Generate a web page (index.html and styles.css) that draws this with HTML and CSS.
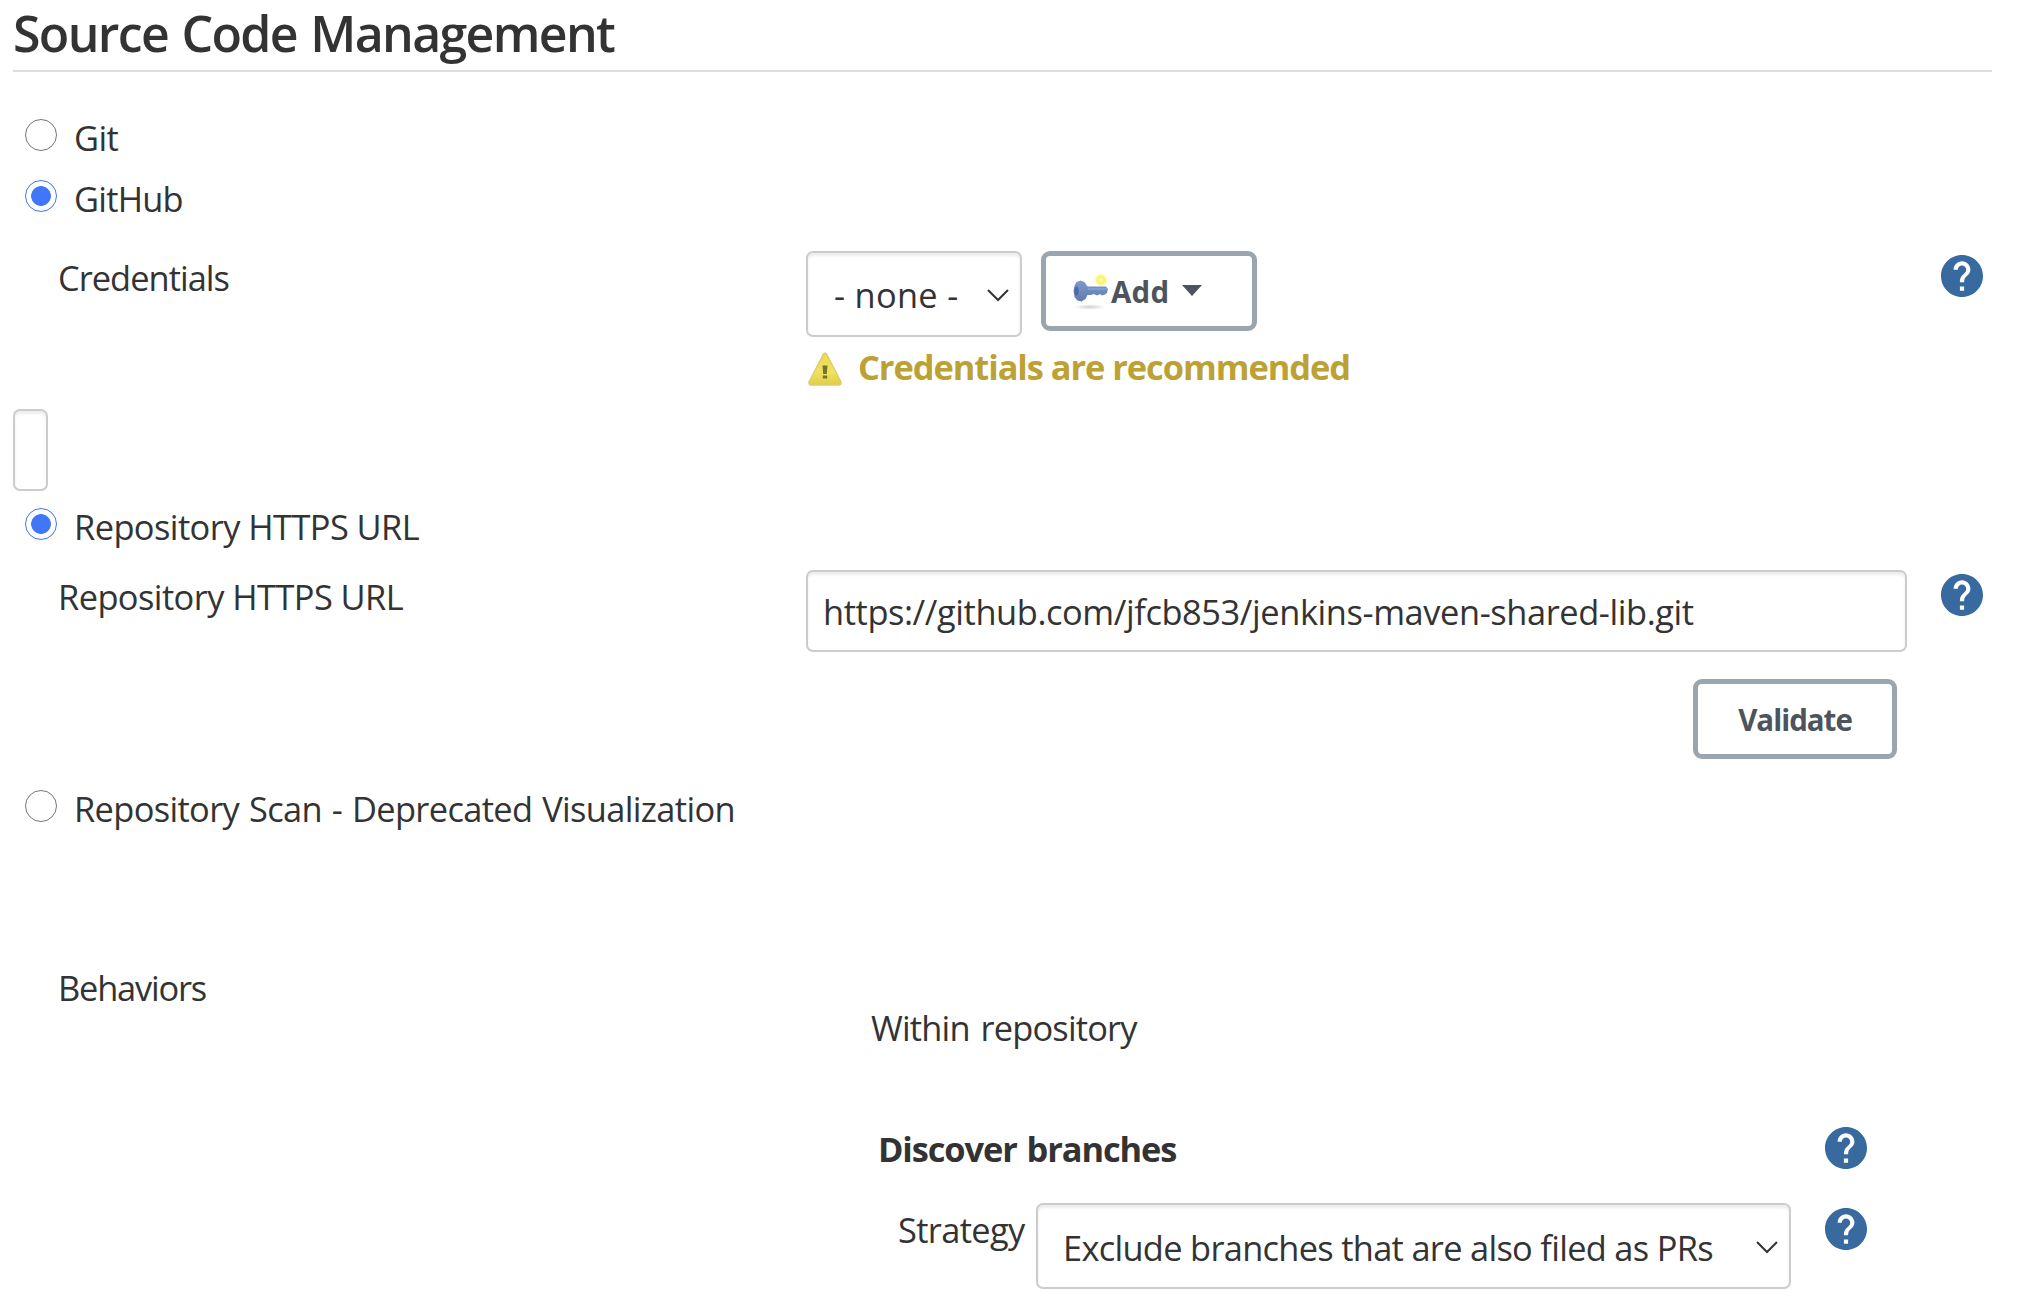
FILE: index.html
```html
<!DOCTYPE html>
<html lang="en">
<head>
<meta charset="utf-8">
<title>Source Code Management</title>
<link rel="stylesheet" href="styles.css">
</head>
<body>
<svg class="sprite" aria-hidden="true">
  <symbol id="help" viewBox="2 2 20 20"><path fill="#38699f" d="M12 2C6.480 2 2 6.480 2 12s4.480 10 10 10 10-4.480 10-10S17.520 2 12 2zm1 17h-2v-2h2v2zm2.070-7.750l-.9.920C13.450 12.900 13 13.500 13 15h-2v-.5c0-1.100.45-2.100 1.170-2.830l1.240-1.260c.37-.36.59-.86.59-1.410 0-1.100-.9-2-2-2s-2 .9-2 2H8c0-2.210 1.790-4 4-4s4 1.790 4 4c0 .88-.36 1.680-.93 2.250z"/></symbol>
  <symbol id="chevron" viewBox="0 0 22 13"><path fill="none" stroke="#333" stroke-width="2" d="M1 1l10 10L21 1"/></symbol>
</svg>
<main class="section">
  <h1 class="title">Source Code Management</h1>
  <div class="radio-row"><span class="radio"></span><span class="t-git">Git</span></div>
  <div class="radio-row"><span class="radio radio-on"></span><span class="t-github">GitHub</span></div>

  <div class="row credentials">
    <div class="label"><span class="t-cred">Credentials</span></div>
    <div>
      <div class="controls">
        <div class="field select select-small"><span class="t-none">- none -</span><svg class="chevron"><use href="#chevron"/></svg></div>
        <button class="button add">
          <svg class="key" viewBox="0 0 36 36">
            <defs>
              <radialGradient id="glow"><stop offset="0" stop-color="#fdf9a0"/><stop offset=".2" stop-color="#fdf9a0"/><stop offset=".5" stop-color="#fbf35c"/><stop offset="1" stop-color="#fbf251" stop-opacity="0"/></radialGradient>
              <radialGradient id="shade"><stop offset="0" stop-color="#bbb" stop-opacity=".7"/><stop offset="1" stop-color="#bbb" stop-opacity="0"/></radialGradient>
              <linearGradient id="blue" x2="0" y2="1"><stop offset="0" stop-color="#7f9bc9"/><stop offset="1" stop-color="#5d7ab5"/></linearGradient>
            </defs>
            <ellipse cx="18" cy="33" rx="16" ry="2.800" fill="url(#shade)"/>
            <path fill="url(#blue)" d="M4.500 8l4-1.500 4 1.500 3 4.500H34l2 2.500-1 4-2 1.500-3 1-2-1.500-3 1.500-3-1.500-3 1h-3.500l-2 4-4 2.500-4-1-3-3.500-1-6 1-5.500z"/>
            <ellipse cx="4.500" cy="17" rx="2" ry="4.500" fill="#4a6aa5"/>
            <path stroke="#8eaad4" stroke-width="1.200" d="M16 15h19"/>
            <circle cx="29" cy="6" r="6.800" fill="url(#glow)"/>
          </svg>
          <span class="t-add">Add</span>
          <svg class="caret" viewBox="0 0 20 11"><path fill="#4d545d" d="M0 0h20L10 11z"/></svg>
        </button>
      </div>
      <div class="warning">
        <svg class="alert" viewBox="0 0 36 35">
          <defs><linearGradient id="gold" x2="0" y2="1"><stop offset="0" stop-color="#ecdc52"/><stop offset=".6" stop-color="#f0e260"/><stop offset="1" stop-color="#dfce45"/></linearGradient></defs>
          <path fill="url(#gold)" stroke="#ddcd6a" stroke-width="1.500" stroke-linejoin="round" d="M16.500 2q1.500-1.500 3 0L34 30q.5 2.500-1.500 3h-29Q1.500 32.500 2 30z"/>
          <path fill="#77702f" d="M15.500 13.500h5l-.7 8.500h-3.600zM15.800 23.500h4.400v3h-4.400z"/>
        </svg>
        <span class="t-warn">Credentials are recommended</span>
      </div>
    </div>
    <svg class="help"><use href="#help"/></svg>
  </div>

  <div class="field stub"></div>
  <div class="radio-row"><span class="radio radio-on"></span><span class="t-url">Repository HTTPS URL</span></div>
  <div class="row repository">
    <div class="label"><span class="t-url">Repository HTTPS URL</span></div>
    <div class="repository-main">
      <div class="field input"><span class="t-link">https://github.com/jfcb853/jenkins-maven-shared-lib.git</span></div>
      <button class="button validate"><span class="t-val">Validate</span></button>
    </div>
    <svg class="help"><use href="#help"/></svg>
  </div>
  <div class="radio-row scan"><span class="radio"></span><span class="t-scan">Repository Scan - Deprecated Visualization</span></div>

  <div class="row behaviors">
    <div class="behaviors-label"><span class="t-beh">Behaviors</span></div>
    <div class="behaviors-main">
      <div class="within"><span class="t-within">Within repository</span></div>
      <div class="discover"><span class="t-disc">Discover branches</span><svg class="help"><use href="#help"/></svg></div>
      <div class="strategy">
        <span class="strategy-label"><span class="t-strat">Strategy</span></span>
        <div class="field select select-wide"><span class="t-excl">Exclude branches that are also filed as PRs</span><svg class="chevron"><use href="#chevron"/></svg></div>
        <svg class="help"><use href="#help"/></svg>
      </div>
    </div>
  </div>
</main>
</body>
</html>
```
FILE: styles.css
```css
* { box-sizing: border-box; }
body {
  margin: 0;
  background: #fff;
  color: #333;
  font: 34.4px/48px "Open Sans", "Noto Sans", sans-serif;
}
.sprite { position: absolute; width: 0; height: 0; }
.section { padding: 0 25px 0 13px; }
.section span { white-space: nowrap; }
.title {
  height: 72px;
  margin: 0 0 42px;
  border-bottom: 2px solid #ddd;
  font-size: 50px;
  line-height: 67px;
  font-weight: 600;
  letter-spacing: -1.65px;
  word-spacing: 2px;
}
.radio-row { display: flex; height: 61px; padding-left: 12px; gap: 17px; }
.radio {
  width: 32px;
  height: 32px;
  margin-top: 5px;
  border: 1px solid #767676;
  border-radius: 50%;
}
.radio-on { border-color: #4076f9; background: radial-gradient(circle, #4076f9 9.500px, transparent 10.200px); }
.row { display: grid; grid-template-columns: 793px 1101px 42px; }
.row > .help { margin: 4px 0 0 34px; }
.label { padding: 3px 0 0 45px; }
.help { width: 42px; height: 42px; flex: none; }
.credentials { height: 158px; margin-top: 15px; }
.controls { display: flex; align-items: flex-start; gap: 19px; height: 92px; }
.field {
  border: 2px solid #ccc;
  border-radius: 7px;
  background: #fff;
  box-shadow: inset 0 3px 3px rgba(0, 0, 0, .075);
}
.select { display: flex; justify-content: space-between; height: 86px; padding: 18px 11px 0 26px; }
.select-small { width: 216px; }
.chevron { width: 22px; height: 13px; margin-top: 18px; flex: none; }
.button {
  display: flex;
  height: 80px;
  padding: 0;
  border: 5px solid #9ba5ad;
  border-radius: 9px;
  background: #fff;
  color: #4d545d;
  font: 700 29.500px/48px "Open Sans", "Noto Sans", sans-serif;
}
.add { width: 216px; padding: 12px 0 0 26px; }
.key { width: 36px; height: 36px; margin: 6px 3px 0 0; }
.caret { width: 20px; height: 11px; margin: 17px 0 0 13px; }
.warning { display: flex; color: #bca134; font-weight: 700; }
.alert { width: 36px; height: 35px; margin: 9px 15px 0 1px; }
.stub { width: 35px; height: 82px; margin-bottom: 12px; }
.repository { margin-top: 6px; }
.input { height: 82px; padding: 16px 15px; }
.validate { width: 204px; justify-content: center; padding-top: 12px; margin: 27px 10px 26px auto; }
.behaviors { margin-top: 118px; }
.behaviors-label { padding-left: 45px; }
.behaviors-main { padding: 40px 0 0 65px; }
.discover { display: flex; justify-content: space-between; width: 996px; margin-top: 73px; padding-left: 7px; font-weight: 700; }
.discover .help { margin-top: 2px; }
.strategy { display: flex; width: 996px; margin-top: 30px; padding-left: 27px; justify-content: space-between; }
.strategy-label { width: 138px; padding-top: 3px; }
.select-wide { width: 755px; margin-right: 34px; padding-top: 19px; padding-left: 25px; }
.select-wide .chevron { margin-top: 17px; }
.strategy .help { margin-top: 5px; }

/* Letter spacing tuned per label */
.t-git { letter-spacing: -.6px; }
.t-github { letter-spacing: -.77px; }
.t-cred { letter-spacing: -.97px; }
.t-none { letter-spacing: .3px; }
.t-add { letter-spacing: .2px; }
.t-warn { letter-spacing: -1.04px; }
.t-url { letter-spacing: -.57px; }
.t-link { letter-spacing: -.41px; }
.t-val { letter-spacing: -1px; }
.t-scan { letter-spacing: -.64px; word-spacing: 1.500px; }
.t-beh { letter-spacing: -1.2px; }
.t-within { letter-spacing: -.8px; word-spacing: 2.500px; }
.t-disc { letter-spacing: -1.1px; word-spacing: 2px; }
.t-strat { letter-spacing: -.65px; }
.t-excl { letter-spacing: -.7px; }
```
